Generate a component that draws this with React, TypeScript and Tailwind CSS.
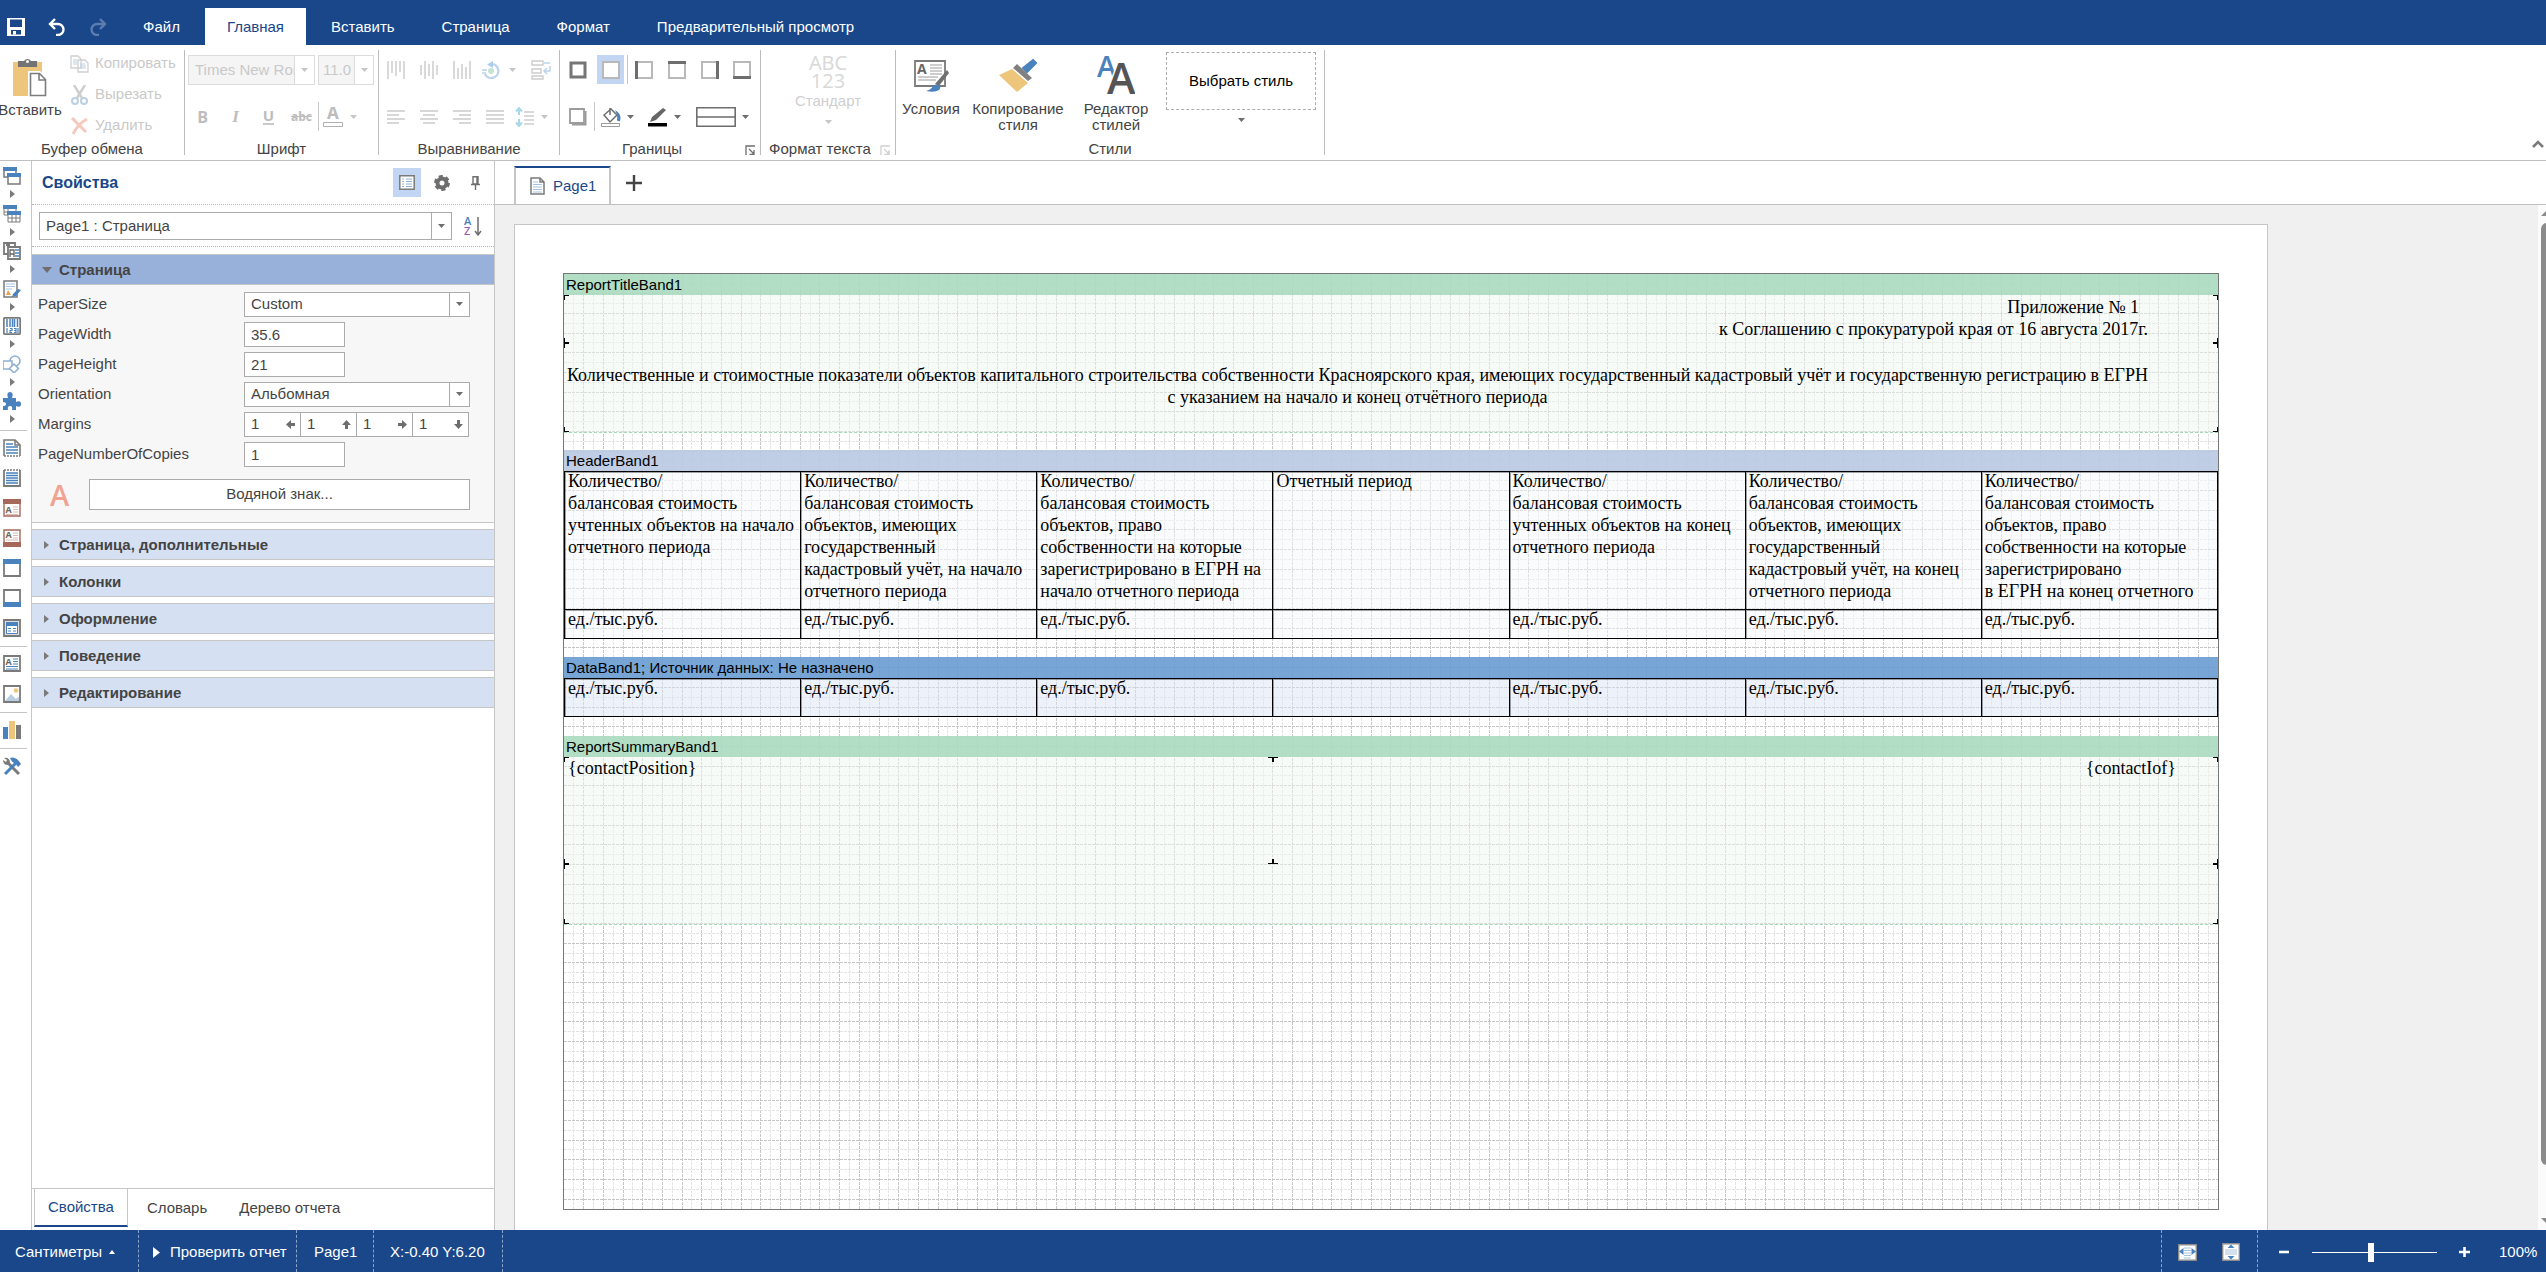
import type { ReactNode } from 'react';
import clsx from 'clsx';

const TABS = ['Файл', 'Главная', 'Вставить', 'Страница', 'Формат', 'Предварительный просмотр'];

const GRAY = '#7a7a7a';
const BLUE = '#4a82bd';
const BROWN = '#a5685a';

function Svg({ w = 18, h = 18, children }: { w?: number; h?: number; children: ReactNode }) {
	return (
		<svg width={w} height={h} viewBox={`0 0 ${w} ${h}`} fill="none" className="shrink-0">
			{children}
		</svg>
	);
}

function Down({ faded = false }: { faded?: boolean }) {
	return (
		<Svg w={7} h={4}>
			<path d="M0 0h7L3.500 4z" fill={faded ? '#c6c6c6' : '#6e6e6e'} />
		</Svg>
	);
}

function Right() {
	return (
		<Svg w={6} h={8}>
			<path d="M1 0l5 4-5 4z" fill="#7a7a7a" />
		</Svg>
	);
}

/* ---------- title bar ---------- */

function TitleBar() {
	return (
		<header className="flex h-[45px] shrink-0 items-end bg-[#19478a] pl-[7px] text-white">
			<div className="mr-[14px] flex h-[37px] items-center gap-[23px]">
				<button aria-label="Сохранить">
					<Svg>
						<path d="M0 0h18v18H0z" fill="#fff" />
						<path d="M3 1.500h12V9H3zM4 12h10v4.500H4z" fill="#19478a" />
						<path d="M6 13h3v3.500H6z" fill="#fff" />
					</Svg>
				</button>
				<button aria-label="Отменить">
					<Svg>
						<path d="M7 1L2 6l5 5M2 6h8a5.500 5.500 0 0 1 0 11H8" stroke="#fff" strokeWidth="2.400" />
					</Svg>
				</button>
				<button aria-label="Вернуть" disabled>
					<Svg>
						<path d="M11 1l5 5-5 5M16 6H8a5.500 5.500 0 0 0 0 11h2" stroke="#5c7dae" strokeWidth="2.400" />
					</Svg>
				</button>
			</div>
			<nav className="flex gap-[3px]">
				{TABS.map((tab) => (
					<button
						key={tab}
						className={clsx(
							'h-[37px] px-[22px] pt-0.5 text-[15px]',
							tab === 'Главная' && 'bg-white text-[#19478a]',
						)}
					>
						{tab}
					</button>
				))}
			</nav>
		</header>
	);
}

/* ---------- ribbon ---------- */

function Group({ label, width, launcher, children }: { label: string; width: string; launcher?: 'on' | 'off'; children: ReactNode }) {
	return (
		<section className="flex">
			<div className={clsx('flex flex-col', width)}>
				<div className="mb-[10px] h-[85px] pt-[10px]">{children}</div>
				<div className={clsx('relative text-center leading-[18px]', launcher && 'pr-[16px]')}>
					{label}
					{launcher && (
						<button aria-label={label + ': параметры'} className="absolute right-[5px] top-[5px]">
							<Svg w={10} h={10}>
								<path
									d="M1 10V1h9M4 4l5 5M9 5v4.500H4.500"
									stroke={launcher === 'on' ? '#6e6e6e' : '#d0d0d0'}
									strokeWidth="1.300"
								/>
							</Svg>
						</button>
					)}
				</div>
			</div>
			<div className="mt-[5px] h-[105px] w-px bg-[#bdbdbd]" />
		</section>
	);
}

function Tool({ label, className, children }: { label: string; className?: string; children: ReactNode }) {
	return (
		<button aria-label={label} className={clsx('flex h-[29px] items-center justify-center', className ?? 'w-[33px]')}>
			{children}
		</button>
	);
}

function Lines({ rows, vertical = false }: { rows: [number, number][]; vertical?: boolean }) {
	return (
		<Svg>
			{rows.map(([a, b], i) =>
				vertical ? (
					<path key={i} d={`M${i * 4 + 1} ${a}V${b}`} stroke="#d0d0d0" strokeWidth="1.600" />
				) : (
					<path key={i} d={`M${a} ${i * 4 + 3}H${b}`} stroke="#cdcdcd" strokeWidth="1.600" />
				),
			)}
		</Svg>
	);
}

function BorderIcon({ side }: { side: 'all' | 'none' | 'left' | 'top' | 'right' | 'bottom' | 'shadow' }) {
	const edges = { left: 'M1.500 0v18', top: 'M0 1.500h18', right: 'M16.500 0v18', bottom: 'M0 16.500h18' };
	return (
		<Svg>
			{side === 'all' && <path d="M2 2h14v14H2z" stroke="#757575" strokeWidth="3" />}
			{side === 'shadow' && (
				<>
					<path d="M16.500 3v13.500H3" stroke="#9c9c9c" strokeWidth="2" />
					<path d="M1 1h14v14H1z" stroke="#9c9c9c" strokeWidth="1.800" fill="#fff" />
				</>
			)}
			{side !== 'all' && side !== 'shadow' && (
				<path d="M1 1h16v16H1z" stroke="#b9b9b9" strokeWidth="2" fill="#fff" />
			)}
			{side in edges && <path d={edges[side as keyof typeof edges]} stroke="#6e6e6e" strokeWidth="3" />}
		</Svg>
	);
}

function Clipboard() {
	return (
		<div className="flex">
			<button className="flex w-[60px] flex-col items-center pt-[3px]">
				<Svg w={34} h={39}>
					<path d="M0 4h29v34H0z" fill="#edc67c" />
					<path d="M5 3h6a4 4 0 0 1 7 0h6v6H5z" fill="#737373" />
					<circle cx="14.500" cy="3.500" r="1.500" fill="#fff" />
					<path d="M15 13h12l7 7v19H15z" fill="#fff" />
					<path d="M17.500 15.500h9l6 6V37.500h-15zM26 15.500V22h6.500" stroke="#7d7d7d" strokeWidth="1.600" />
				</Svg>
				<span className="mt-1 leading-[18px]">Вставить</span>
			</button>
			<div className="ml-[10px] flex flex-col text-[#c9c9c9]">
				<button disabled className="-mt-[7px] flex h-[31px] items-center gap-[6px]">
					<Svg w={19} h={18}>
						<path d="M1 1h7l3 3v9H1zM8 5h7l3 3v9H8z" stroke="#d0d0d0" strokeWidth="1.300" fill="#fff" />
						<path d="M3 5h4M3 7h4M3 9h4M10 9h5M10 11h6M10 13h6" stroke="#bcd0e5" />
					</Svg>
					Копировать
				</button>
				<button disabled className="flex h-[31px] items-center gap-[6px]">
					<Svg w={19} h={20}>
						<path d="M4 0l8 13M15 0L7 13" stroke="#cfcfcf" strokeWidth="2.500" />
						<circle cx="5" cy="16" r="3" stroke="#bcd0e5" strokeWidth="2" />
						<circle cx="14" cy="16" r="3" stroke="#bcd0e5" strokeWidth="2" />
					</Svg>
					Вырезать
				</button>
				<button disabled className="flex h-[31px] items-center gap-[6px]">
					<Svg w={19} h={18}>
						<path d="M2 1l14 14M17 2Q8 7 3 17" stroke="#f5c9bd" strokeWidth="3" />
					</Svg>
					Удалить
				</button>
			</div>
		</div>
	);
}

function FontGroup() {
	return (
		<div className="pl-[3px] text-[#c9c9c9]">
			<div className="flex gap-[3px]">
				<label className="flex h-[30px] w-[127px] border border-[#dcdcdc]">
					<input
						aria-label="Имя шрифта"
						disabled
						defaultValue="Times New Roman"
						className="w-[105px] bg-[#f5f5f5] pl-[6px]"
					/>
					<span className="flex flex-1 items-center justify-center border-l border-[#dcdcdc]">
						<Down faded />
					</span>
				</label>
				<label className="flex h-[30px] w-[56px] border border-[#dcdcdc]">
					<input aria-label="Размер" disabled defaultValue="11.0" className="w-[35px] bg-[#f5f5f5] pl-1" />
					<span className="flex flex-1 items-center justify-center border-l border-[#dcdcdc]">
						<Down faded />
					</span>
				</label>
			</div>
			<div className="mt-[17px] flex text-[#bdbdbd]">
				<Tool label="Полужирный" className="ml-[-2px] w-[33px]">
					<b className="font-['Open_Sans'] text-base">B</b>
				</Tool>
				<Tool label="Курсив">
					<b className="font-['Liberation_Serif'] text-[17px] italic">I</b>
				</Tool>
				<Tool label="Подчеркнутый">
					<b className="border-b-2 border-[#c9c9c9] font-['Open_Sans'] text-[15px] leading-[15px]">U</b>
				</Tool>
				<Tool label="Зачеркнутый">
					<b className="font-['Open_Sans'] text-[12px] line-through">abc</b>
				</Tool>
				<Tool label="Цвет текста" className="w-[42px] gap-[7px] border-l border-[#c6c6c6]">
					<Svg w={20} h={20}>
						<text x="4" y="12" fontFamily="Open Sans" fontWeight="700" fontSize="17" fill="#bdbdbd">
							A
						</text>
						<path d="M.5 15.500h19v4H.5z" stroke="#b0b0b0" fill="#fff" />
					</Svg>
					<Down faded />
				</Tool>
			</div>
		</div>
	);
}

function Alignment() {
	return (
		<div>
			<div className="flex">
				<Tool label="По верхнему краю">
					<Lines vertical rows={[[0, 18], [0, 12], [0, 15], [0, 11], [0, 18]]} />
				</Tool>
				<Tool label="По центру по вертикали">
					<Lines vertical rows={[[4, 14], [0, 18], [3, 15], [0, 18], [4, 14]]} />
				</Tool>
				<Tool label="По нижнему краю">
					<Lines vertical rows={[[0, 18], [7, 18], [3, 18], [6, 18], [0, 18]]} />
				</Tool>
				<Tool label="Угол" className="mr-1 w-[42px] gap-[9px]">
					<Svg>
						<path d="M9 3a7 7 0 1 1-6 10" stroke="#bcd5ec" strokeWidth="2.400" />
						<path d="M11 0L5 3.500 11 7z" fill="#a9cdea" />
						<path d="M0 9h5M0 12h4" stroke="#bcd5ec" strokeWidth="1.500" />
						<circle cx="9" cy="10" r="3" fill="#c5e3d2" />
					</Svg>
					<Down faded />
				</Tool>
				<Tool label="Перенос слов">
					<Svg w={20} h={20}>
						<path d="M1 1h11v4H1zM1 9h9v4H1zM1 19v-3h11v3z" stroke="#cdcdcd" strokeWidth="1.400" />
						<path d="M13 3h6M19 6v5h-6M16 8l-3 3 3 3" stroke="#bcd5ec" strokeWidth="1.500" />
					</Svg>
				</Tool>
			</div>
			<div className="mt-[18px] flex">
				<Tool label="По левому краю">
					<Lines rows={[[0, 18], [0, 12], [0, 18], [0, 12]]} />
				</Tool>
				<Tool label="По центру">
					<Lines rows={[[0, 18], [3, 15], [0, 18], [3, 15]]} />
				</Tool>
				<Tool label="По правому краю">
					<Lines rows={[[0, 18], [6, 18], [0, 18], [6, 18]]} />
				</Tool>
				<Tool label="По ширине">
					<Lines rows={[[0, 18], [0, 18], [0, 18], [0, 18]]} />
				</Tool>
				<Tool label="Междустрочный интервал" className="w-[41px] gap-[7px]">
					<Svg w={19} h={20}>
						<path d="M4 2v6M4 12v6M1 4.500L4 1l3 3.500M1 15.500L4 19l3-3.500" stroke="#a9d8e8" strokeWidth="2" />
						<path d="M9 5h10M9 9h10M9 13h10M9 17h10" stroke="#cdcdcd" strokeWidth="1.500" />
					</Svg>
					<Down faded />
				</Tool>
			</div>
		</div>
	);
}

function Borders() {
	return (
		<div className="pl-px">
			<div className="flex">
				<Tool label="Все">
					<BorderIcon side="all" />
				</Tool>
				<Tool label="Нет">
					<span className="flex h-[29px] w-[27px] items-center justify-center bg-[#c2d5f2]">
						<BorderIcon side="none" />
					</span>
				</Tool>
				<Tool label="Слева" className="w-[33px] border-l border-[#c6c6c6]">
					<BorderIcon side="left" />
				</Tool>
				<Tool label="Сверху">
					<BorderIcon side="top" />
				</Tool>
				<Tool label="Справа">
					<BorderIcon side="right" />
				</Tool>
				<Tool label="Снизу" className="w-8">
					<BorderIcon side="bottom" />
				</Tool>
			</div>
			<div className="mt-[18px] flex">
				<Tool label="Тень">
					<BorderIcon side="shadow" />
				</Tool>
				<Tool label="Цвет фона" className="w-[46px] gap-[6px] border-l border-[#c6c6c6]">
					<Svg w={20} h={20}>
						<path d="M10 2L3 8l6 7 7-7-6-6zM9 8V1" stroke="#6e6e6e" strokeWidth="1.500" fill="#fff" />
						<path d="M14 3q7 4 5 11-2 1-3-1 1-5-2-10z" fill={BLUE} />
						<path d="M.5 16.500h18v3H.5z" stroke="#9a9a9a" fill="#fff" />
					</Svg>
					<Down />
				</Tool>
				<Tool label="Цвет границы" className="w-[49px] gap-[6px]">
					<Svg w={20} h={20}>
						<path d="M2 15l2-5L15 1l3 2L8 13z" fill="#666" />
						<path d="M0 16h19v3.500H0z" fill="#000" />
					</Svg>
					<Down />
				</Tool>
				<Tool label="Стиль границы" className="w-[66px] gap-[6px]">
					<Svg w={40} h={20}>
						<path d="M.8.8h38.400v18.400H.8zM0 10h40" stroke="#6e6e6e" strokeWidth="1.600" />
					</Svg>
					<Down />
				</Tool>
			</div>
		</div>
	);
}

function Styles() {
	return (
		<div className="flex items-start text-center leading-4">
			<button className="flex w-[70px] flex-col items-center">
				<Svg w={36} h={40}>
					<path d="M2 6h30v25H2z" stroke={GRAY} strokeWidth="1.800" fill="#fff" />
					<text x="4" y="19" fontFamily="Open Sans" fontWeight="700" fontSize="14" fill="#666">
						A
					</text>
					<path d="M17 10h12M17 13h12M17 16h12M17 19h12M5 22h20M5 25h18" stroke="#9a9a9a" />
					<path d="M34 15l2 3-10 13-4-2z" fill="#707070" />
					<path d="M13 36q5-1 7-5 1-2 5-1 4 2 1 5-4 3-13 1z" fill={BLUE} />
				</Svg>
				<span className="mt-[6px]">Условия</span>
			</button>
			<button className="flex w-[104px] flex-col items-center">
				<Svg w={38} h={40}>
					<path d="M34 5l3 3-9 9-4-4z" fill={BLUE} stroke={BLUE} strokeWidth="2" />
					<path d="M18 9l15 14-4 3-15-13z" fill="#808080" />
					<path d="M13 14l16 14-11 9L0 20z" fill="#edc67c" />
				</Svg>
				<span className="mt-[6px]">
					Копирование
					<br />
					стиля
				</span>
			</button>
			<button className="flex w-[92px] flex-col items-center">
				<Svg w={38} h={40}>
					<text x="0" y="22" fontFamily="Open Sans" fontWeight="600" fontSize="29" fill={BLUE}>
						A
					</text>
					<text x="10" y="39" fontFamily="Open Sans" fontWeight="600" fontSize="43" fill="#555" stroke="#fff" strokeWidth="3" paintOrder="stroke">
						A
					</text>
				</Svg>
				<span className="mt-[6px]">
					Редактор
					<br />
					стилей
				</span>
			</button>
			<button className="ml-1 flex w-[150px] flex-col items-center">
				<span className="-mt-[3px] flex h-[58px] w-full items-center justify-center border border-dashed border-[#adadad] text-black">
					Выбрать стиль
				</span>
				<span className="mt-2">
					<Down />
				</span>
			</button>
		</div>
	);
}

function Ribbon() {
	return (
		<div className="flex h-[116px] shrink-0 border-b border-[#c0c0c0] bg-white">
			<Group label="Буфер обмена" width="w-[184px]">
				<Clipboard />
			</Group>
			<Group label="Шрифт" width="w-[193px]">
				<FontGroup />
			</Group>
			<Group label="Выравнивание" width="w-[180px]">
				<Alignment />
			</Group>
			<Group label="Границы" width="w-[200px]" launcher="on">
				<Borders />
			</Group>
			<Group label="Формат текста" width="w-[134px]" launcher="off">
				<button disabled className="flex w-full flex-col items-center text-[#cfcfcf]">
					<span className="-mt-px font-['Open_Sans'] text-[20px] leading-[18px] text-[#d8d8d8]">
						ABC
						<br />
						123
					</span>
					<span className="mt-[3px] mb-[11px] leading-[16px]">Стандарт</span>
					<Down faded />
				</button>
			</Group>
			<Group label="Стили" width="w-[428px]">
				<Styles />
			</Group>
			<button aria-label="Свернуть ленту" className="ml-auto mr-[2px] self-end pb-[12px]">
				<Svg w={12} h={8}>
					<path d="M1 7l5-5 5 5" stroke="#7a7a7a" strokeWidth="2.500" />
				</Svg>
			</button>
		</div>
	);
}

/* ---------- component toolbox ---------- */

const frame = <path d="M1 1h16v16H1z" stroke={GRAY} strokeWidth="1.800" fill="#fff" />;

const FLYOUTS: [string, ReactNode][] = [
	[
		'Бэнды',
		<>
			<path d="M1 1h12v9H1z" stroke={GRAY} strokeWidth="1.500" fill="#fff" />
			<path d="M0 0h14v4H0z" fill={BLUE} />
			<path d="M5 7h12v10H5z" stroke={GRAY} strokeWidth="1.500" fill="#fff" />
			<path d="M4 6h14v4H4z" fill={BLUE} />
		</>,
	],
	[
		'Кросс-бэнды',
		<>
			<path d="M1 1h12v9H1zM1 7h12M5 4v6" stroke={GRAY} fill="#fff" />
			<path d="M0 0h14v4H0z" fill={BLUE} />
			<path d="M5 7h12v10H5zM5 13h12M9 10v7M13 10v7" stroke={GRAY} fill="#fff" />
			<path d="M4 6h14v4H4z" fill={BLUE} />
		</>,
	],
	[
		'Компоненты',
		<>
			<path d="M1 1h11v11H1zM3 3h4" stroke={GRAY} strokeWidth="1.800" fill="#fff" />
			<path d="M5 5h12v12H5z" stroke={GRAY} strokeWidth="1.800" fill="#fff" />
			<path d="M7 15V8h4v7M7 12h4" stroke="#666" strokeWidth="1.300" />
			<path d="M12 8h4M12 11h4M12 14h4" stroke={BLUE} strokeWidth="1.300" />
		</>,
	],
	[
		'Подписи',
		<>
			<path d="M1 1h13v16H1z" stroke={GRAY} strokeWidth="1.500" fill="#fff" />
			<path d="M3 4h9M3 6.500h9M3 9h6" stroke="#a8c3df" />
			<path d="M3 15l2-5 3 5z" fill="#e9a04c" />
			<path d="M18 10l-5 6-4 1 1-3 5-5z" fill={BLUE} />
		</>,
	],
	[
		'Штрих-коды',
		<>
			<rect x=".8" y=".8" width="16.400" height="16.400" rx="1.500" stroke={GRAY} strokeWidth="1.800" fill="#fff" />
			<path d="M4 2v8M7 2v8M9.500 2v8M11.500 2v8M14.500 2v8" stroke={BLUE} strokeWidth="1.500" />
			<path d="M4 11v5M7 11.500h2v2H7v2h2M11 11.500h2v4h-2M11 13.500h2M15 11v5" stroke={BLUE} strokeWidth="1.200" />
		</>,
	],
	[
		'Фигуры',
		<>
			<circle cx="12" cy="6" r="5" stroke="#8fb0d3" strokeWidth="1.600" />
			<path d="M0 6h9v8H0z" stroke="#8fb0d3" strokeWidth="1.600" fill="#fff" />
			<path d="M11 9l4.500 4.500L11 18l-4.500-4.500z" stroke="#8fb0d3" strokeWidth="1.500" fill="#fff" />
		</>,
	],
	[
		'Плагины',
		<path
			d="M0 6h5q-2-6 2-6t2 6h4v4q5-2 5 2t-5 2v4H9q1-4-2-4t-2 4H0v-4q3 0 3-2t-3-2z"
			fill={BLUE}
		/>,
	],
];

const BANDS: [string, ReactNode][] = [
	[
		'Заголовок отчета',
		<>
			<path d="M1 17V1h11l5 5v11" stroke={GRAY} strokeWidth="1.600" fill="#fff" />
			<path d="M12 1v5h5" stroke={GRAY} strokeWidth="1.500" />
			<path d="M3 5h7M3 8h12M3 11h12M3 14h12" stroke={BLUE} strokeWidth="1.300" />
			<path d="M1 17h16" stroke={GRAY} strokeWidth="1.500" strokeDasharray="2 1" />
		</>,
	],
	[
		'Итог отчета',
		<>
			<path d="M1 1v16h16V1" stroke={GRAY} strokeWidth="1.800" fill="#fff" />
			<path d="M1 1h16" stroke={GRAY} strokeWidth="1.500" strokeDasharray="2 1" />
			<path d="M3 4h12M3 6.500h12M3 9h12M3 11.500h12M3 14h12" stroke={BLUE} strokeWidth="1.400" />
		</>,
	],
	[
		'Заголовок страницы',
		<>
			<path d="M1 1h16v16H1z" stroke={BROWN} strokeWidth="1.400" fill="#fff" />
			<path d="M0 0h18v5H0z" fill={BROWN} />
			<text x="2.500" y="14" fontFamily="Open Sans" fontWeight="700" fontSize="9" fill="#666">A</text>
			<path d="M10 8h5M10 10.500h5M10 13h5M3 15.500h12" stroke="#d9b9b0" />
		</>,
	],
	[
		'Итог страницы',
		<>
			<path d="M1 1h16v16H1z" stroke={BROWN} strokeWidth="1.400" fill="#fff" />
			<path d="M0 13h18v5H0z" fill={BROWN} />
			<text x="2.500" y="9" fontFamily="Open Sans" fontWeight="700" fontSize="9" fill="#666">A</text>
			<path d="M10 4h5M10 6.500h5M10 9h5M3 11h12" stroke="#d9b9b0" />
		</>,
	],
	['Заголовок', <>{frame}<path d="M0 0h18v5H0z" fill={BLUE} /></>],
	['Итог', <>{frame}<path d="M0 13h18v5H0z" fill={BLUE} /></>],
	[
		'Данные',
		<>
			<path d="M1 1h16v16H1z" stroke={GRAY} strokeWidth="1.800" fill="#e0e0e0" />
			<path d="M3.500 3.500h11v11h-11z" stroke={BLUE} fill="#fff" />
			<path d="M3 3h12v4H3z" fill={BLUE} />
			<path d="M5 9.500h3M10 9.500h3M5 12h3M10 12h3" stroke={BLUE} />
		</>,
	],
];

const EXTRAS: [string, ReactNode][] = [
	[
		'Текст',
		<>
			<path d="M1 1h16v15H1z" stroke={GRAY} strokeWidth="1.800" fill="#fff" />
			<text x="2.500" y="9.500" fontFamily="Open Sans" fontWeight="700" fontSize="9" fill="#666">A</text>
			<path d="M10 4h5M10 6.500h5M10 9h5M3 11.500h12M3 14h12" stroke={BLUE} />
		</>,
	],
	[
		'Изображение',
		<>
			{frame}
			<circle cx="13" cy="5.500" r="2.300" fill="#edc67c" />
			<path d="M2 16l6-7 5 5 2-2 1 1v3z" fill="#b9cde3" />
		</>,
	],
];

function ToolItem({ name, children }: { name: string; children: ReactNode }) {
	return (
		<button aria-label={name} className="flex h-[30px] items-center pl-[3px]">
			<Svg>{children}</Svg>
		</button>
	);
}

function Rule() {
	return <div className="mt-[3px] mb-0.5 h-px w-[27px] shrink-0 bg-[#c6c6c6]" />;
}

function Toolbox() {
	return (
		<aside className="flex w-[31px] shrink-0 flex-col bg-white">
			{FLYOUTS.map(([name, icon], i) => (
				<button key={name} aria-label={name} className={clsx('flex flex-col pl-[3px] pt-[6px]', i % 2 ? 'h-[37px]' : 'h-[38px]')}>
					<Svg>{icon}</Svg>
					<span className="mt-[5px] ml-[6px]">
						<Right />
					</span>
				</button>
			))}
			<div className="h-[3px]" />
			<Rule />
			{BANDS.map(([name, icon]) => (
				<ToolItem key={name} name={name}>{icon}</ToolItem>
			))}
			<Rule />
			{EXTRAS.map(([name, icon]) => (
				<ToolItem key={name} name={name}>{icon}</ToolItem>
			))}
			<Rule />
			<ToolItem name="Диаграмма">
				<path d="M0 6h5v12H0z" fill={BLUE} />
				<path d="M6 0h6v18H6z" fill="#edc67c" />
				<path d="M13 4h5v14h-5z" fill={GRAY} />
			</ToolItem>
			<Rule />
			<ToolItem name="Настройка">
				<path d="M16 17L5 6" stroke={GRAY} strokeWidth="3" />
				<path d="M1 1q5-1 6 4L5 8Q0 8 0 3l3 2 1-2z" fill={GRAY} />
				<path d="M2 17L13 6" stroke={BLUE} strokeWidth="3" />
				<path d="M7 1q6-2 11 6l-3 3-3-4q-3 0-5-5z" fill={BLUE} />
			</ToolItem>
		</aside>
	);
}

/* ---------- property panel ---------- */

function Select({ id, value, className }: { id: string; value: string; className: string }) {
	return (
		<div className={clsx('relative flex border border-[#ababab] bg-white', className)}>
			<select id={id} className="min-w-0 flex-1 appearance-none pl-[6px] leading-[18px]">
				<option>{value}</option>
			</select>
			<span className="pointer-events-none flex w-5 items-center justify-center border-l border-[#ababab]">
				<Down />
			</span>
		</div>
	);
}

function Row({ id, label, children }: { id: string; label: string; children: ReactNode }) {
	return (
		<div className="flex h-[30px] items-center pl-[6px]">
			<label htmlFor={id} className="w-[206px]">
				{label}
			</label>
			{children}
		</div>
	);
}

function TextField({ id, value }: { id: string; value: string }) {
	return <input id={id} defaultValue={value} className="h-[25px] w-[101px] border border-[#ababab] bg-white pl-[6px]" />;
}

// rotation of the arrow drawn next to each margin
const MARGINS = [
	['Слева', 'rotate-180'],
	['Сверху', '-rotate-90'],
	['Справа', 'rotate-0'],
	['Снизу', 'rotate-90'],
];

const SECTIONS = ['Страница, дополнительные', 'Колонки', 'Оформление', 'Поведение', 'Редактирование'];

function Properties() {
	return (
		<aside className="flex w-[464px] shrink-0 flex-col border-x border-[#c6c6c6] bg-white">
			<div className="flex h-[44px] items-center border-b border-dotted border-[#b5b5b5] pl-[10px] pr-[7px]">
				<h2 className="flex-1 text-base font-bold text-[#19478a]">Свойства</h2>
				<button aria-label="Показать панель" className="flex h-[29px] w-7 items-center justify-center bg-[#c2d5f2]">
					<Svg w={16} h={15}>
						<path d="M.8.8h14.400v13.400H.8z" stroke={GRAY} strokeWidth="1.500" fill="#fff" />
						<path d="M3 4h2M3 6.500h2M3 9h2M3 11.500h2M7 4h6M7 6.500h6M7 9h6M7 11.500h6" stroke="#8fb0d3" />
					</Svg>
				</button>
				<button aria-label="Настройки" className="flex w-[42px] justify-center">
					<Svg w={16} h={16}>
						<circle cx="8" cy="8" r="4.500" stroke="#6e6e6e" strokeWidth="4" />
						<circle cx="8" cy="8" r="6.800" stroke="#6e6e6e" strokeWidth="2.400" strokeDasharray="4.120 3" />
					</Svg>
				</button>
				<button aria-label="Закрепить" className="flex w-6 justify-center">
					<Svg w={9} h={14}>
						<path d="M2 .7h5V8H2zM0 8.500h9M4.500 8v6M6 1v7" stroke="#6e6e6e" strokeWidth="1.400" />
					</Svg>
				</button>
			</div>
			<div className="mb-[7px] flex h-[42px] items-center border-b border-dotted border-[#b5b5b5] pl-[7px]">
				<label htmlFor="component" className="sr-only">
					Компонент
				</label>
				<Select id="component" value="Page1 : Страница" className="h-[28px] w-[413px]" />
				<button aria-label="По алфавиту" className="ml-3">
					<Svg w={18} h={20}>
						<text x="0" y="9" fontFamily="Open Sans" fontWeight="600" fontSize="11" fill={BLUE}>A</text>
						<text x="0" y="19" fontFamily="Open Sans" fontWeight="600" fontSize="11" fill="#9a5fb5">Z</text>
						<path d="M14 1v17M11 15l3 4 3-4" stroke="#6e6e6e" strokeWidth="1.500" />
					</Svg>
				</button>
			</div>
			<button className="flex h-[31px] items-center gap-[7px] border-y border-[#c6c6c6] bg-[#98b1db] pl-[10px] pt-px font-bold">
				<Svg w={10} h={6}>
					<path d="M0 0h10L5 6z" fill="#6e6e6e" />
				</Svg>
				Страница
			</button>
			<div className="mb-[6px] border-b border-[#c6c6c6] bg-[#f7f7f7] pt-1 pb-[12px]">
				<Row id="paper-size" label="PaperSize">
					<Select id="paper-size" value="Custom" className="h-[25px] w-[226px]" />
				</Row>
				<Row id="page-width" label="PageWidth">
					<TextField id="page-width" value="35.6" />
				</Row>
				<Row id="page-height" label="PageHeight">
					<TextField id="page-height" value="21" />
				</Row>
				<Row id="orientation" label="Orientation">
					<Select id="orientation" value="Альбомная" className="h-[25px] w-[226px]" />
				</Row>
				<Row id="margin-0" label="Margins">
					<div className="flex h-[25px] w-[225px] border border-[#ababab] bg-white">
						{MARGINS.map(([side, turn], i) => (
							<div key={side} className="flex flex-1 items-center border-r border-[#ababab] pr-[5px] last:border-r-0">
								<input id={`margin-${i}`} aria-label={side} defaultValue="1" className="w-0 flex-1 pl-[6px]" />
								<span className={turn}>
									<Svg w={9} h={9}>
										<path d="M0 3h4V0l5 4.500L4 9V6H0z" fill="#6e6e6e" />
									</Svg>
								</span>
							</div>
						))}
					</div>
				</Row>
				<Row id="copies" label="PageNumberOfCopies">
					<TextField id="copies" value="1" />
				</Row>
				<div className="mt-[10px] flex h-[31px] items-center">
					<span className="w-[57px] pl-[18px] font-['Open_Sans'] text-[29px] font-semibold leading-[31px] text-[#f0a390]">A</span>
					<button className="h-[31px] w-[381px] border border-[#ababab] bg-white">Водяной знак...</button>
				</div>
			</div>
			{SECTIONS.map((name) => (
				<button
					key={name}
					className="mb-[6px] flex h-[31px] shrink-0 items-center gap-[10px] border-y border-[#c6c6c6] bg-[#d5e0f2] pl-[11px] pt-px font-bold"
				>
					<Right />
					{name}
				</button>
			))}
			<div className="mt-auto flex h-[42px] border-t border-[#c6c6c6] pl-[2px]">
				<button className="h-[38px] border-x border-b-2 border-x-[#c6c6c6] border-b-[#19478a] px-[13px] text-[#19478a]">
					Свойства
				</button>
				<button className="h-[38px] pl-[19px] pr-4">Словарь</button>
				<button className="h-[38px] px-4">Дерево отчета</button>
			</div>
		</aside>
	);
}

/* ---------- report sheet ---------- */

// one grid step is 0.2 cm, the printable area is 33.6 x 19 cm
function Grid() {
	const cols = Array.from({ length: 167 }, (_, i) => i + 1);
	const rows = Array.from({ length: 94 }, (_, i) => i + 1);
	return (
		<svg
			viewBox="0 0 168 95"
			preserveAspectRatio="none"
			shapeRendering="crispEdges"
			className="absolute inset-0 h-full w-full"
		>
			{cols.map((x) => (
				<path
					key={`c${x}`}
					d={`M${x} 0V95`}
					stroke={x % 2 ? '#e4e4e4' : '#c6c6c6'}
					strokeDasharray="3 1"
					vectorEffect="non-scaling-stroke"
				/>
			))}
			{rows.map((y) => (
				<path
					key={`r${y}`}
					d={`M0 ${y}H168`}
					stroke={y % 2 ? '#e4e4e4' : '#c6c6c6'}
					strokeDasharray="3 1"
					vectorEffect="non-scaling-stroke"
				/>
			))}
		</svg>
	);
}

function TextBox({ className, children }: { className: string; children?: ReactNode }) {
	return (
		<div className={clsx('relative', className)}>
			{children}
			<i className="absolute left-0 top-0 size-[5px] border-l border-t border-black" />
			<i className="absolute right-0 top-0 size-[5px] border-r border-t border-black" />
			<i className="absolute bottom-0 left-0 size-[5px] border-b border-l border-black" />
			<i className="absolute bottom-0 right-0 size-[5px] border-b border-r border-black" />
		</div>
	);
}

function BandTitle({ color, children }: { color: string; children: ReactNode }) {
	return <div className={clsx('h-[21px] pl-[2px] leading-[22px] text-black', color)}>{children}</div>;
}

const UNITS = 'ед./тыс.руб.';

const HEADERS = [
	'Количество/\nбалансовая стоимость\nучтенных объектов на начало\nотчетного периода',
	'Количество/\nбалансовая стоимость\nобъектов, имеющих\nгосударственный\nкадастровый учёт, на начало\nотчетного периода',
	'Количество/\nбалансовая стоимость\nобъектов, право\nсобственности на которые\nзарегистрировано в ЕГРН на\nначало отчетного периода',
	'Отчетный период',
	'Количество/\nбалансовая стоимость\nучтенных объектов на конец\nотчетного периода',
	'Количество/\nбалансовая стоимость\nобъектов, имеющих\nгосударственный\nкадастровый учёт, на конец\nотчетного периода',
	'Количество/\nбалансовая стоимость\nобъектов, право\nсобственности на которые\nзарегистрировано\nв ЕГРН на конец отчетного\nпериода',
];

const SERIF = "font-['Liberation_Serif',serif] text-[18px] leading-[22px] text-black";
const CELL = 'border border-black p-0 text-left align-top font-normal shadow-[inset_1px_1px_0_#00000059]';

function UnitsRow({ height }: { height: string }) {
	return (
		<tr className={height}>
			{HEADERS.map((_, i) => (
				<td key={i} className={CELL}>
					<div className="-mt-0.5 pl-[3px]">{i === 3 ? '' : UNITS}</div>
				</td>
			))}
		</tr>
	);
}

function Sheet() {
	return (
		<div className="w-[1754px] border border-[#c6c6c6] bg-white p-12">
			<div className="relative h-[937px] border border-[#777]">
				<Grid />
				<div className="relative">
					<section className="overflow-hidden">
						<BandTitle color="bg-[#a8dabf]/90">ReportTitleBand1</BandTitle>
						<div className={clsx('border-b border-dashed border-[#a3d6bb] bg-[#eef7f2]/50', SERIF)}>
							<TextBox className="h-[48px] whitespace-pre pr-[70px] pt-px text-right">
								{'Приложение № 1\u00a0\u00a0\nк Соглашению с прокуратурой края от 16 августа 2017г.'}
							</TextBox>
							<TextBox className="flex h-[89px] flex-col items-center justify-center whitespace-nowrap pb-1 pr-[67px]">
								<p>
									Количественные и стоимостные показатели объектов капитального строительства собственности
									Красноярского края, имеющих государственный кадастровый учёт и государственную регистрацию в ЕГРН
								</p>
								<p>с указанием на начало и конец отчётного периода</p>
							</TextBox>
						</div>
					</section>
					<section className="mt-[17px]">
						<BandTitle color="bg-[#b8c8e2]/90">HeaderBand1</BandTitle>
						<table className={clsx('w-full table-fixed border-collapse bg-[#f4f7fb]/50', SERIF)}>
							<tbody>
								<tr className="h-[138px]">
									{HEADERS.map((text, i) => (
										<th key={i} scope="col" className={CELL}>
											<div className="-mt-0.5 h-[138px] overflow-hidden whitespace-pre pl-[3px]">{text}</div>
										</th>
									))}
								</tr>
								<UnitsRow height="h-[29px]" />
							</tbody>
						</table>
					</section>
					<section className="mt-[18px]">
						<BandTitle color="bg-[#689bd1]/90">DataBand1; Источник данных: Не назначено</BandTitle>
						<table className={clsx('w-full table-fixed border-collapse bg-[#dce6f5]/50', SERIF)}>
							<tbody>
								<UnitsRow height="h-[38px]" />
							</tbody>
						</table>
					</section>
					<section className="mt-[19px]">
						<BandTitle color="bg-[#a8dabf]/90">ReportSummaryBand1</BandTitle>
						<div className={clsx('border-b border-dashed border-[#a3d6bb] bg-[#eef7f2]/50', SERIF)}>
							<div className="flex">
								<TextBox className="h-[107px] w-[709px] pl-1">{'{contactPosition}'}</TextBox>
								<TextBox className="h-[107px] flex-1 pr-[42px] text-right">{'{contactIof}'}</TextBox>
							</div>
							<TextBox className="h-[60px]" />
						</div>
					</section>
				</div>
			</div>
		</div>
	);
}

function Workspace() {
	return (
		<main className="flex min-w-0 flex-1 flex-col">
			<div className="flex h-[44px] shrink-0 items-end border-b border-[#c0c0c0] bg-white pl-[19px]">
				<button className="flex h-[38px] w-[97px] items-center gap-2 border-x-2 border-t-2 border-x-[#c6c6c6] border-t-[#19478a] pl-[14px] text-[#19478a]">
					<Svg w={15} h={18}>
						<path d="M1 1h9l4 4v12H1zM10 1v4h4" stroke={GRAY} strokeWidth="1.500" fill="#fff" />
						<path d="M3 5h5M3 7.500h9M3 10h9M3 12.500h9M3 15h9" stroke="#a8c3df" />
					</Svg>
					Page1
				</button>
				<button aria-label="Добавить страницу" className="ml-[15px] flex h-[42px] items-center">
					<Svg w={16} h={16}>
						<path d="M8 0v16M0 8h16" stroke="#444" strokeWidth="2.400" />
					</Svg>
				</button>
			</div>
			<div className="flex min-h-0 flex-1 bg-[#f0f0f0]">
				<div className="min-w-0 flex-1 overflow-hidden pl-[19px] pt-[19px]">
					<Sheet />
				</div>
				<div className="flex w-2 flex-col overflow-hidden bg-[#fbfbfb] pl-[3px] pt-[6px] pb-[7px]">
					<Svg w={12} h={5}>
						<path d="M0 5l6-6 6 6z" fill="#8b8b8b" />
					</Svg>
					<div className="mt-[7px] h-[942px] w-3 rounded-md bg-[#8b8b8b]" />
					<div className="mt-auto">
						<Svg w={12} h={5}>
							<path d="M0 0h12L6 6z" fill="#8b8b8b" />
						</Svg>
					</div>
				</div>
			</div>
		</main>
	);
}

/* ---------- status bar ---------- */

function StatusBar() {
	return (
		<footer className="flex h-[42px] shrink-0 items-stretch bg-[#19478a] text-white">
			<button className="flex w-[138px] items-center gap-[7px] pl-[15px] pt-0.5">
				Сантиметры
				<Svg w={6} h={4}>
					<path d="M0 4l3-4 3 4z" fill="#fff" />
				</Svg>
			</button>
			<button className="flex w-[158px] items-center gap-[10px] border-l border-dashed border-[#8ba3c6] pl-[14px] pt-0.5">
				<Svg w={7} h={11}>
					<path d="M0 0l7 5.500L0 11z" fill="#fff" />
				</Svg>
				Проверить отчет
			</button>
			<span className="flex w-[77px] items-center border-l border-dashed border-[#8ba3c6] pl-[17px] pt-0.5">Page1</span>
			<span className="flex w-[130px] items-center border-x border-dashed border-[#8ba3c6] pl-4 pt-0.5">X:-0.40 Y:6.20</span>
			<div className="ml-auto flex w-[97px] items-center gap-[25px] border-x border-dashed border-[#8ba3c6] pl-4 pt-0.5">
				<button aria-label="По ширине страницы">
					<Svg w={19} h={17}>
						<path d="M.7.7h17.600v15.600H.7z" stroke="#8c8c8c" strokeWidth="1.400" fill="#fff" />
						<path d="M6 4h7M6 6.500h7M6 9h7M6 11.500h7M6 14h7" stroke="#a8c3df" />
						<path d="M1 7.500L5.500 4v7zM18 7.500L13.500 4v7z" fill={BLUE} />
					</Svg>
				</button>
				<button aria-label="Страница целиком">
					<Svg w={18} h={18}>
						<path d="M.7.7h16.600v16.600H.7z" stroke="#8c8c8c" strokeWidth="1.400" fill="#fff" />
						<path d="M3 7h12M3 9h12M3 11h12" stroke="#a8c3df" />
						<path d="M9 1.500L12.500 5h-7zM9 16.500L12.500 13h-7z" fill={BLUE} />
					</Svg>
				</button>
			</div>
			<button aria-label="Уменьшить" className="w-[54px] pl-[21px] pt-0.5">
				<Svg w={10} h={10}>
					<path d="M0 5h10" stroke="#fff" strokeWidth="2.600" />
				</Svg>
			</button>
			<input
				type="range"
				aria-label="Масштаб"
				defaultValue={47}
				className="w-[125px] appearance-none bg-transparent pt-0.5 [&::-webkit-slider-runnable-track]:h-px [&::-webkit-slider-runnable-track]:bg-white [&::-webkit-slider-thumb]:-mt-[9px] [&::-webkit-slider-thumb]:h-[19px] [&::-webkit-slider-thumb]:w-[6px] [&::-webkit-slider-thumb]:appearance-none [&::-webkit-slider-thumb]:bg-white"
			/>
			<button aria-label="Увеличить" className="w-[56px] pl-[22px] pt-0.5">
				<Svg w={11} h={10}>
					<path d="M0 5h11M5.500 0v10" stroke="#fff" strokeWidth="2.600" />
				</Svg>
			</button>
			<span className="flex w-[53px] items-center pl-[6px] pt-0.5">100%</span>
		</footer>
	);
}

export default function App() {
	return (
		<div className="flex h-screen flex-col overflow-hidden bg-white font-['Liberation_Sans',Arial,sans-serif] text-[15px] text-[#444]">
			<TitleBar />
			<Ribbon />
			<div className="flex min-h-0 flex-1">
				<Toolbox />
				<Properties />
				<Workspace />
			</div>
			<StatusBar />
		</div>
	);
}
